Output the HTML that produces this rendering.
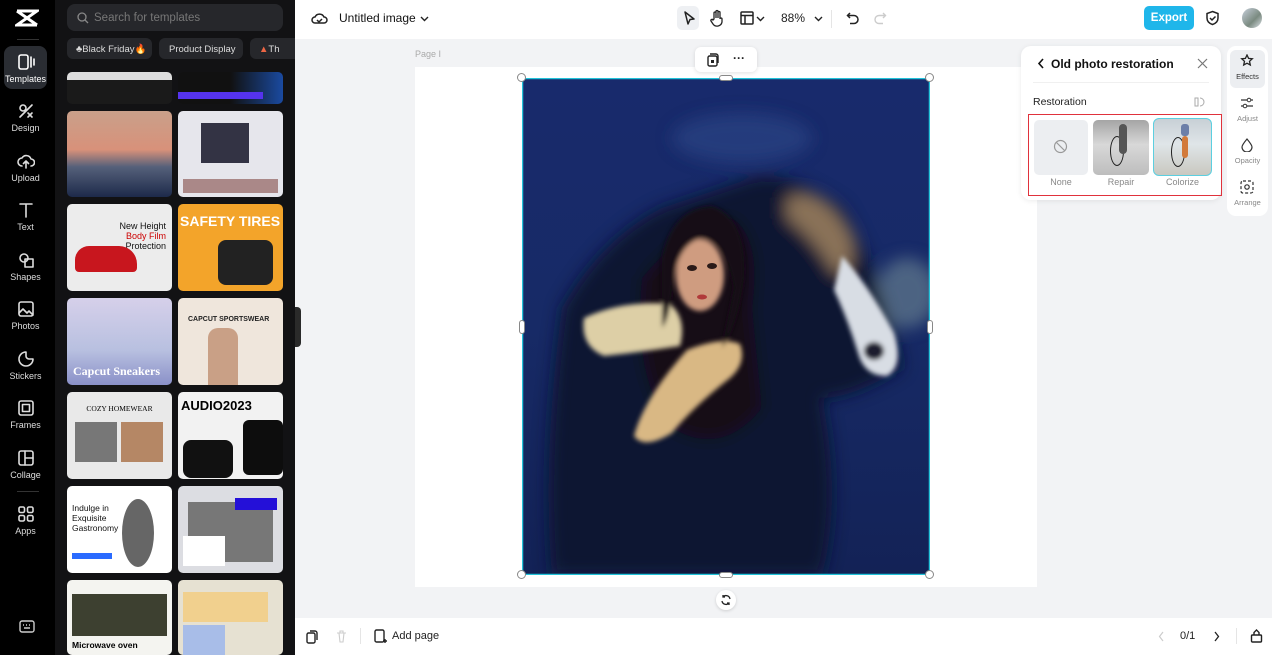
<!DOCTYPE html>
<html><head><meta charset="utf-8"><style>
*{box-sizing:border-box;margin:0;padding:0}
body{width:1272px;height:655px;overflow:hidden;font-family:"Liberation Sans",sans-serif;background:#f2f3f5;position:relative}
.abs{position:absolute}
.rail{left:0;top:0;width:55px;height:655px;background:#000}
.ri{position:absolute;left:4px;width:43px;height:48px;color:#ddd;font-size:9px;text-align:center}
.ri svg{display:block;margin:7px auto 3px}
.panel{left:55px;top:0;width:240px;height:655px;background:#121214}
.th{position:absolute;width:105px;border-radius:5px;overflow:hidden}
.top{left:295px;top:0;width:977px;height:39px;background:#fff}
.bot{left:295px;top:618px;width:977px;height:37px;background:#fff}
.ic{stroke:#222;fill:none;stroke-width:1.6;stroke-linecap:round;stroke-linejoin:round}
.h{position:absolute;width:9px;height:9px;border-radius:50%;background:#fff;border:1px solid #888}
</style></head><body>
<div class="abs rail">
 <svg class="abs" style="left:15px;top:9px" width="24" height="18" viewBox="0 0 24 18"><path d="M2 2h20L2 16h20M2 2l20 14" stroke="#fff" stroke-width="3" fill="none"/></svg>
 <div class="abs" style="left:17px;top:39px;width:22px;height:1px;background:#333"></div>
 <div class="ri" style="top:46px;background:#2a2d33;border-radius:8px;color:#fff;height:43px"><svg width="18" height="18" viewBox="0 0 18 18" class="ic" style="stroke:#fff"><rect x="2" y="2" width="9" height="14" rx="2"/><path d="M14 4v10M17 6v6"/></svg>Templates</div>
 <div class="ri" style="top:95px"><svg width="18" height="18" viewBox="0 0 18 18" class="ic" style="stroke:#ddd"><circle cx="6" cy="6" r="3"/><path d="M3 15l12-12M11 11l4 4M15 11l-4 4"/></svg>Design</div>
 <div class="ri" style="top:145px"><svg width="18" height="18" viewBox="0 0 18 18" class="ic" style="stroke:#ddd"><path d="M5 14a4 4 0 010-8 5 5 0 019 1 3.5 3.5 0 010 7M9 9v7M6.5 11.5L9 9l2.5 2.5"/></svg>Upload</div>
 <div class="ri" style="top:194px"><svg width="18" height="18" viewBox="0 0 18 18" class="ic" style="stroke:#ddd"><path d="M3 3h12M9 3v13"/></svg>Text</div>
 <div class="ri" style="top:244px"><svg width="18" height="18" viewBox="0 0 18 18" class="ic" style="stroke:#ddd"><circle cx="7" cy="7" r="4"/><rect x="8" y="8" width="8" height="8"/></svg>Shapes</div>
 <div class="ri" style="top:293px"><svg width="18" height="18" viewBox="0 0 18 18" class="ic" style="stroke:#ddd"><rect x="2" y="2" width="14" height="14" rx="2"/><path d="M2 13l4-4 4 4 2-2 4 4"/></svg>Photos</div>
 <div class="ri" style="top:343px"><svg width="18" height="18" viewBox="0 0 18 18" class="ic" style="stroke:#ddd"><path d="M16 9a7 7 0 11-7-7v4a3 3 0 003 3z"/></svg>Stickers</div>
 <div class="ri" style="top:392px"><svg width="18" height="18" viewBox="0 0 18 18" class="ic" style="stroke:#ddd"><rect x="2" y="2" width="14" height="14" rx="2"/><rect x="5.5" y="5.5" width="7" height="7"/></svg>Frames</div>
 <div class="ri" style="top:442px"><svg width="18" height="18" viewBox="0 0 18 18" class="ic" style="stroke:#ddd"><rect x="2" y="2" width="14" height="14" rx="2"/><path d="M8 2v14M8 9h8"/></svg>Collage</div>
 <div class="abs" style="left:17px;top:491px;width:22px;height:1px;background:#333"></div>
 <div class="ri" style="top:498px"><svg width="18" height="18" viewBox="0 0 18 18" class="ic" style="stroke:#ddd"><rect x="2" y="2" width="5.5" height="5.5" rx="1.5"/><rect x="10.5" y="2" width="5.5" height="5.5" rx="1.5"/><rect x="2" y="10.5" width="5.5" height="5.5" rx="1.5"/><rect x="10.5" y="10.5" width="5.5" height="5.5" rx="1.5"/></svg>Apps</div>
 <svg class="abs" style="left:19px;top:620px" width="16" height="13" viewBox="0 0 16 13"><rect x="1" y="1" width="14" height="11" rx="2" stroke="#ccc" fill="none" stroke-width="1.4"/><path d="M4 5h1M7 5h1M10 5h1M5 8h6" stroke="#ccc" stroke-width="1.4"/></svg>
</div>
<div class="abs panel">
 <div class="abs" style="left:12px;top:4px;width:216px;height:27px;background:#26272b;border-radius:8px;color:#777;font-size:11.5px;padding:8px 0 0 27px">Search for templates
  <svg class="abs" style="left:10px;top:8px" width="12" height="12" viewBox="0 0 12 12"><circle cx="5" cy="5" r="4" stroke="#888" fill="none" stroke-width="1.3"/><path d="M8 8l3 3" stroke="#888" stroke-width="1.3"/></svg></div>
 <div class="abs" style="left:12px;top:38px;width:85px;height:21px;background:#26272b;border-radius:6px;color:#ddd;font-size:9.5px;padding:6px 0 0 9px">♣Black Friday<span style="color:#f60">🔥</span></div>
 <div class="abs" style="left:104px;top:38px;width:84px;height:21px;background:#26272b;border-radius:6px;color:#ddd;font-size:9.5px;padding:6px 0 0 10px">Product Display</div>
 <div class="abs" style="left:195px;top:38px;width:45px;height:21px;background:#26272b;border-radius:6px 0 0 6px;color:#ddd;font-size:9.5px;padding:6px 0 0 9px"><span style="color:#e64">▲</span>Th</div>
 <div class="th" style="left:12px;top:72px;height:32px;background:#1a1a1a"><div style="height:8px;background:#ddd"></div></div>
 <div class="th" style="left:123px;top:72px;height:32px;background:linear-gradient(90deg,#111 50%,#1a4aa0)"><div style="margin-top:20px;height:7px;width:85px;background:#5533ee"></div></div>
 <div class="th" style="left:12px;top:111px;height:86px;background:linear-gradient(#c9a08a,#d8917a 45%,#55607a 65%,#1d2a4a)"></div>
 <div class="th" style="left:123px;top:111px;height:86px;background:#e6e6ec"><div class="abs" style="left:23px;top:12px;width:48px;height:40px;background:#334"></div><div class="abs" style="left:5px;top:68px;width:95px;height:14px;background:#a88"></div></div>
 <div class="th" style="left:12px;top:204px;height:87px;background:#ececec;font-size:9px;color:#111;text-align:right;padding:17px 6px 0 0;line-height:10px">New Height<br><span style="color:#c00">Body Film</span><br>Protection<div class="abs" style="left:8px;top:42px;width:62px;height:26px;background:#c8161e;border-radius:14px 18px 4px 4px"></div></div>
 <div class="th" style="left:123px;top:204px;height:87px;background:#f3a42a;color:#fff;font-weight:bold;font-size:14px;padding:9px 0 0 2px;white-space:nowrap">SAFETY TIRES<div class="abs" style="left:40px;top:36px;width:55px;height:45px;background:#222;border-radius:8px"></div></div>
 <div class="th" style="left:12px;top:298px;height:87px;background:linear-gradient(#d6d0ea,#b8c0e0 60%,#8a90c8)"><div class="abs" style="left:6px;top:66px;color:#fff;font-weight:bold;font-size:12px;font-family:'Liberation Serif',serif">Capcut Sneakers</div></div>
 <div class="th" style="left:123px;top:298px;height:87px;background:#efe6dc"><div class="abs" style="left:10px;top:18px;font-size:7px;font-weight:bold;color:#222">CAPCUT SPORTSWEAR</div><div class="abs" style="left:30px;top:30px;width:30px;height:57px;background:#c9a086;border-radius:10px 10px 0 0"></div></div>
 <div class="th" style="left:12px;top:392px;height:87px;background:#e9e9e9"><div style="font-size:7.5px;text-align:center;margin-top:12px;font-family:'Liberation Serif',serif">COZY HOMEWEAR</div><div class="abs" style="left:8px;top:30px;width:42px;height:40px;background:#777"></div><div class="abs" style="left:54px;top:30px;width:42px;height:40px;background:#b58765"></div></div>
 <div class="th" style="left:123px;top:392px;height:87px;background:#f2f2f2"><div style="font-size:13px;font-weight:bold;margin:6px 0 0 3px">AUDIO2023</div><div class="abs" style="left:5px;top:48px;width:50px;height:38px;background:#111;border-radius:8px"></div><div class="abs" style="left:65px;top:28px;width:40px;height:55px;background:#0d0d0d;border-radius:6px"></div></div>
 <div class="th" style="left:12px;top:486px;height:87px;background:#fff;font-size:8.5px;line-height:10px;color:#111;padding:17px 0 0 5px">Indulge in<br>Exquisite<br>Gastronomy<div class="abs" style="left:55px;top:13px;width:32px;height:68px;background:#666;border-radius:50%"></div><div class="abs" style="left:5px;top:67px;width:40px;height:6px;background:#2a6bff"></div></div>
 <div class="th" style="left:123px;top:486px;height:87px;background:#dcdde2"><div class="abs" style="left:10px;top:16px;width:85px;height:60px;background:#777"></div><div class="abs" style="left:57px;top:12px;width:42px;height:12px;background:#2410d8"></div><div class="abs" style="left:5px;top:50px;width:42px;height:30px;background:#fff"></div></div>
 <div class="th" style="left:12px;top:580px;height:75px;background:#f4f4f0"><div class="abs" style="left:5px;top:14px;width:95px;height:42px;background:#3d4030"></div><div style="position:absolute;top:60px;left:5px;font-size:8.5px;font-weight:bold">Microwave oven</div></div>
 <div class="th" style="left:123px;top:580px;height:75px;background:#e6e1d2"><div class="abs" style="left:5px;top:12px;width:85px;height:30px;background:#f1d08e"></div><div class="abs" style="left:5px;top:45px;width:42px;height:30px;background:#a8bde8"></div></div>
 <div class="abs" style="left:240px;top:307px;width:6px;height:40px;background:#2a2a2a;border-radius:0 4px 4px 0"></div>
</div>

<div class="abs top">
 <svg class="abs" style="left:16px;top:10px" width="17" height="17" viewBox="0 0 17 17"><path d="M4 13a3 3 0 010-6 5 5 0 019 0 3 3 0 010 6z" stroke="#222" fill="none" stroke-width="1.5"/><path d="M6 10l2 2 3-3" stroke="#222" fill="none" stroke-width="1.5"/></svg>
 <div class="abs" style="left:44px;top:11px;font-size:12px;color:#111">Untitled image</div>
 <svg class="abs" style="left:125px;top:14px" width="9" height="9" viewBox="0 0 9 9"><path d="M1 3l3.5 3.5L8 3" stroke="#222" fill="none" stroke-width="1.4"/></svg>
 <div class="abs" style="left:382px;top:6px;width:22px;height:24px;background:#eef0f3;border-radius:5px"></div>
 <svg class="abs" style="left:387px;top:10px" width="14" height="16" viewBox="0 0 14 16"><path d="M3 2l9 7-4 .5-2 4.5z" stroke="#222" fill="none" stroke-width="1.5" stroke-linejoin="round"/></svg>
 <svg class="abs" style="left:414px;top:9px" width="16" height="18" viewBox="0 0 16 18"><path d="M5 10V4a1 1 0 012 0v5V2.5a1 1 0 012 0V9V3.5a1 1 0 012 0V10a1 1 0 012 0v3a5 5 0 01-9 2l-2-3a1 1 0 012-1z" stroke="#222" fill="none" stroke-width="1.3"/></svg>
 <svg class="abs" style="left:445px;top:11px" width="14" height="14" viewBox="0 0 14 14"><rect x="1" y="1" width="12" height="12" rx="1" stroke="#222" fill="none" stroke-width="1.5"/><path d="M1 4.5h12M5 4.5V13" stroke="#222" stroke-width="1.5"/></svg>
 <svg class="abs" style="left:461px;top:14px" width="9" height="9" viewBox="0 0 9 9"><path d="M1 3l3.5 3.5L8 3" stroke="#222" fill="none" stroke-width="1.4"/></svg>
 <div class="abs" style="left:486px;top:11px;font-size:12px;color:#222">88%</div>
 <svg class="abs" style="left:519px;top:14px" width="9" height="9" viewBox="0 0 9 9"><path d="M1 3l3.5 3.5L8 3" stroke="#222" fill="none" stroke-width="1.4"/></svg>
 <div class="abs" style="left:536px;top:10px;width:1px;height:18px;background:#e5e5e5"></div>
 <svg class="abs" style="left:551px;top:11px" width="14" height="14" viewBox="0 0 14 14"><path d="M4 2L1.5 4.5 4 7M1.5 4.5H8a4 4 0 010 8H4" stroke="#222" fill="none" stroke-width="1.5"/></svg>
 <svg class="abs" style="left:578px;top:11px" width="14" height="14" viewBox="0 0 14 14"><path d="M10 2l2.5 2.5L10 7M12.5 4.5H6a4 4 0 000 8h4" stroke="#ccc" fill="none" stroke-width="1.4"/></svg>
 <div class="abs" style="left:849px;top:6px;width:50px;height:24px;background:#1fb6ea;border-radius:5px;color:#fff;font-size:11.5px;font-weight:bold;text-align:center;line-height:24px">Export</div>
 <svg class="abs" style="left:910px;top:10px" width="15" height="16" viewBox="0 0 15 16"><path d="M7.5 1.5l5.5 2v4.5c0 3.5-2.5 5.5-5.5 6.5C4.5 13.5 2 11.5 2 8V3.5z" stroke="#222" fill="none" stroke-width="1.5"/><path d="M5 8l2 2 3.5-3.5" stroke="#222" fill="none" stroke-width="1.5"/></svg>
 <div class="abs" style="left:947px;top:8px;width:20px;height:20px;border-radius:50%;background:linear-gradient(135deg,#c8d0dc,#7a8a80 60%,#dfe4ea)"></div>
</div>

<div class="abs" style="left:415px;top:49px;font-size:9px;color:#aaa">Page I</div>
<div class="abs" style="left:415px;top:67px;width:622px;height:520px;background:#fff"></div>
<div class="abs" style="left:695px;top:47px;width:62px;height:25px;background:#fff;border-radius:6px;box-shadow:0 1px 4px rgba(0,0,0,.12)"></div>
<svg class="abs" style="left:705px;top:53px" width="14" height="14" viewBox="0 0 14 14"><rect x="3" y="3" width="9" height="10" rx="1.5" stroke="#222" fill="none" stroke-width="1.4"/><path d="M5 1h6a2 2 0 012 2v7" stroke="#222" fill="none" stroke-width="1.4"/><rect x="6" y="7" width="3" height="3" fill="#222"/></svg>
<div class="abs" style="left:733px;top:51px;font-size:12px;font-weight:bold;color:#222">···</div>

<svg class="abs" style="left:522px;top:78px" width="408" height="497" viewBox="0 0 408 497">
 <defs>
  <filter id="b" x="-20%" y="-20%" width="140%" height="140%"><feGaussianBlur stdDeviation="8"/></filter>
  <filter id="b2"><feGaussianBlur stdDeviation="2.5"/></filter>
  <linearGradient id="bg" x1="0" y1="0" x2="0" y2="1"><stop offset="0" stop-color="#182a6c"/><stop offset=".5" stop-color="#172a66"/><stop offset="1" stop-color="#132256"/></linearGradient>
 </defs>
 <rect width="408" height="497" fill="url(#bg)"/>
 <g filter="url(#b)">
  <ellipse cx="220" cy="60" rx="70" ry="25" fill="#2f4888" opacity=".6"/>
  <ellipse cx="385" cy="215" rx="30" ry="35" fill="#6f8a94" opacity=".6"/>
  <path d="M40 230 Q80 160 140 130 Q200 110 230 100 Q260 90 320 130 Q360 200 380 290 Q330 320 300 320 Q320 420 300 497 H30 Q20 380 40 230z" fill="#0d1330"/>
  <path d="M120 200 Q170 140 210 140 Q240 160 230 230 L240 330 Q200 380 150 350 Q110 300 120 200z" fill="#121118"/>
  <path d="M265 120 Q300 105 330 160 Q335 200 312 195 Q292 160 265 140z" fill="#8a7258"/>
 </g>
 <g filter="url(#b2)">
  <path d="M320 178 Q345 205 372 255 Q382 288 365 298 Q342 298 336 275 Q326 242 312 212z" fill="#d8dde4"/>
  <ellipse cx="352" cy="273" rx="10" ry="9" fill="#1a1e2e"/>
  <path d="M62 240 Q100 222 148 226 Q165 240 158 268 Q120 274 82 278 Q58 268 62 240z" fill="#ddcfa6"/>
  <path d="M165 272 Q200 258 218 266 Q225 285 208 300 Q170 330 150 355 Q122 372 112 358 Q122 320 165 272z" fill="#d9b884"/>
  <ellipse cx="178" cy="197" rx="24" ry="36" fill="#cf9c80"/>
  <path d="M140 180 Q150 130 190 128 Q225 140 222 200 Q215 250 200 270 L212 210 Q205 165 180 160 Q155 165 150 210 Q148 240 140 250z" fill="#141117"/>
 </g>
 <ellipse cx="170" cy="190" rx="5" ry="3" fill="#2a1a18"/><ellipse cx="190" cy="188" rx="5" ry="3" fill="#2a1a18"/>
 <ellipse cx="180" cy="219" rx="5" ry="2.5" fill="#b03a3a"/>
 <rect x="0.5" y="0.5" width="407" height="496" fill="none" stroke="#22c3d9" stroke-width="1.5"/>
</svg>
<div class="h" style="left:517px;top:73px"></div><div class="h" style="left:925px;top:73px"></div>
<div class="h" style="left:517px;top:570px"></div><div class="h" style="left:925px;top:570px"></div>
<div class="abs" style="left:719px;top:75px;width:14px;height:6px;border-radius:3px;background:#fff;border:1px solid #888"></div>
<div class="abs" style="left:719px;top:572px;width:14px;height:6px;border-radius:3px;background:#fff;border:1px solid #888"></div>
<div class="abs" style="left:519px;top:320px;width:6px;height:14px;border-radius:3px;background:#fff;border:1px solid #888"></div>
<div class="abs" style="left:927px;top:320px;width:6px;height:14px;border-radius:3px;background:#fff;border:1px solid #888"></div>
<div class="abs" style="left:716px;top:590px;width:20px;height:20px;border-radius:50%;background:#fff;box-shadow:0 1px 3px rgba(0,0,0,.15)"></div>
<svg class="abs" style="left:720px;top:594px" width="12" height="12" viewBox="0 0 12 12"><path d="M10 5a4 4 0 00-7-2M2 7a4 4 0 007 2M3 1v2h2M9 11V9H7" stroke="#222" fill="none" stroke-width="1.3"/></svg>

<div class="abs" style="left:1021px;top:46px;width:200px;height:154px;background:#fff;border-radius:10px;box-shadow:0 1px 6px rgba(0,0,0,.08)"></div>
<svg class="abs" style="left:1037px;top:58px" width="9" height="11" viewBox="0 0 9 11"><path d="M6 1L2 5.5 6 10" stroke="#111" fill="none" stroke-width="1.6"/></svg>
<div class="abs" style="left:1051px;top:57px;font-size:12px;font-weight:bold;color:#111">Old photo restoration</div>
<svg class="abs" style="left:1197px;top:58px" width="11" height="11" viewBox="0 0 11 11"><path d="M1 1l9 9M10 1l-9 9" stroke="#777" stroke-width="1.2"/></svg>
<div class="abs" style="left:1033px;top:82px;width:176px;height:1px;background:#f0f0f0"></div>
<div class="abs" style="left:1033px;top:96px;font-size:10.5px;color:#222">Restoration</div>
<svg class="abs" style="left:1193px;top:96px" width="12" height="12" viewBox="0 0 12 12"><path d="M2 2h3v8H2zM7 2a4 4 0 010 8" stroke="#aaa" fill="none" stroke-width="1"/></svg>
<div class="abs" style="left:1028px;top:114px;width:194px;height:82px;border:1.5px solid #e0323c"></div>
<div class="abs" style="left:1034px;top:120px;width:54px;height:55px;background:#eceef1;border-radius:5px"></div>
<svg class="abs" style="left:1053px;top:139px" width="15" height="15" viewBox="0 0 15 15"><circle cx="7.5" cy="7.5" r="6" stroke="#999" fill="none" stroke-width="1.2"/><path d="M3.5 3.5l8 8" stroke="#999" stroke-width="1.2"/></svg>
<div class="abs" style="left:1034px;top:177px;width:54px;text-align:center;font-size:9px;color:#888">None</div>
<div class="abs" style="left:1093px;top:120px;width:56px;height:55px;background:linear-gradient(#a5a5a5,#d8d8d8 45%,#bdbdbd);border-radius:5px;overflow:hidden"><div class="abs" style="left:17px;top:16px;width:14px;height:30px;border-radius:50%;border:1.5px solid #222"></div><div class="abs" style="left:26px;top:4px;width:8px;height:30px;background:#555;border-radius:4px"></div></div>
<div class="abs" style="left:1093px;top:177px;width:56px;text-align:center;font-size:9px;color:#888">Repair</div>
<div class="abs" style="left:1153px;top:118px;width:59px;height:58px;background:linear-gradient(#c8d0d6,#dfe5e8 45%,#c9c8c0);border:1.5px solid #5ccfe0;border-radius:6px;overflow:hidden"><div class="abs" style="left:17px;top:18px;width:14px;height:30px;border-radius:50%;border:1.5px solid #222"></div><div class="abs" style="left:27px;top:5px;width:8px;height:12px;background:#6c7fa8;border-radius:3px"></div><div class="abs" style="left:28px;top:17px;width:6px;height:22px;background:#d27a3a;border-radius:3px"></div></div>
<div class="abs" style="left:1153px;top:177px;width:59px;text-align:center;font-size:9px;color:#888">Colorize</div>

<div class="abs" style="left:1227px;top:46px;width:41px;height:170px;background:#fff;border-radius:9px"></div>
<div class="abs" style="left:1230px;top:50px;width:35px;height:38px;background:#eceef1;border-radius:6px"></div>
<svg class="abs" style="left:1240px;top:54px" width="14" height="14" viewBox="0 0 14 14"><path d="M7 1l1.6 3.4 3.7.4-2.8 2.5.8 3.7L7 9.2 3.7 11l.8-3.7L1.7 4.8l3.7-.4z" stroke="#222" fill="none" stroke-width="1.3"/></svg>
<div class="abs" style="left:1227px;top:72px;width:41px;text-align:center;font-size:7.5px;color:#333">Effects</div>
<svg class="abs" style="left:1240px;top:96px" width="14" height="14" viewBox="0 0 14 14"><path d="M1 4h12M1 10h12" stroke="#333" stroke-width="1.2"/><circle cx="9" cy="4" r="1.8" fill="#fff" stroke="#333"/><circle cx="5" cy="10" r="1.8" fill="#fff" stroke="#333"/></svg>
<div class="abs" style="left:1227px;top:114px;width:41px;text-align:center;font-size:7.5px;color:#888">Adjust</div>
<svg class="abs" style="left:1241px;top:138px" width="12" height="14" viewBox="0 0 12 14"><path d="M6 1Q1 7 1 9a5 5 0 0010 0Q11 7 6 1z" stroke="#333" fill="none" stroke-width="1.2"/></svg>
<div class="abs" style="left:1227px;top:156px;width:41px;text-align:center;font-size:7.5px;color:#888">Opacity</div>
<svg class="abs" style="left:1240px;top:180px" width="14" height="14" viewBox="0 0 14 14"><rect x="1" y="1" width="12" height="12" rx="2" stroke="#333" fill="none" stroke-width="1.2" stroke-dasharray="3 2"/><circle cx="7" cy="7" r="2.2" stroke="#333" fill="none" stroke-width="1.2"/></svg>
<div class="abs" style="left:1227px;top:198px;width:41px;text-align:center;font-size:7.5px;color:#888">Arrange</div>

<div class="abs bot">
 <svg class="abs" style="left:11px;top:12px" width="13" height="14" viewBox="0 0 13 14"><rect x="1" y="3" width="8" height="10" rx="1.5" stroke="#222" fill="none" stroke-width="1.4"/><path d="M4 1h5a2 2 0 012 2v7" stroke="#222" fill="none" stroke-width="1.4"/></svg>
 <svg class="abs" style="left:41px;top:12px" width="11" height="13" viewBox="0 0 11 13"><path d="M1 3h9M3 3l1 9h3l1-9M4 3V1h3v2" stroke="#ccc" fill="none" stroke-width="1.1"/></svg>
 <div class="abs" style="left:65px;top:10px;width:1px;height:16px;background:#e5e5e5"></div>
 <svg class="abs" style="left:79px;top:11px" width="14" height="15" viewBox="0 0 14 15"><rect x="1" y="1" width="9" height="12" rx="1.5" stroke="#222" fill="none" stroke-width="1.4"/><path d="M11 10v4M9 12h4" stroke="#222" stroke-width="1.4"/></svg>
 <div class="abs" style="left:97px;top:12px;font-size:11px;color:#222">Add page</div>
 <svg class="abs" style="left:863px;top:13px" width="7" height="11" viewBox="0 0 7 11"><path d="M5 1L1.5 5.5 5 10" stroke="#ccc" fill="none" stroke-width="1.2"/></svg>
 <div class="abs" style="left:885px;top:12px;font-size:11px;color:#222">0/1</div>
 <svg class="abs" style="left:918px;top:13px" width="7" height="11" viewBox="0 0 7 11"><path d="M2 1l3.5 4.5L2 10" stroke="#222" fill="none" stroke-width="1.3"/></svg>
 <div class="abs" style="left:941px;top:10px;width:1px;height:16px;background:#e5e5e5"></div>
 <svg class="abs" style="left:955px;top:11px" width="13" height="14" viewBox="0 0 13 14"><rect x="1.5" y="6" width="10" height="7" rx="1" stroke="#222" fill="none" stroke-width="1.4"/><path d="M4 6V3.5L6.5 1 9 3.5V6" stroke="#222" fill="none" stroke-width="1.4"/></svg>
</div>
</body></html>
